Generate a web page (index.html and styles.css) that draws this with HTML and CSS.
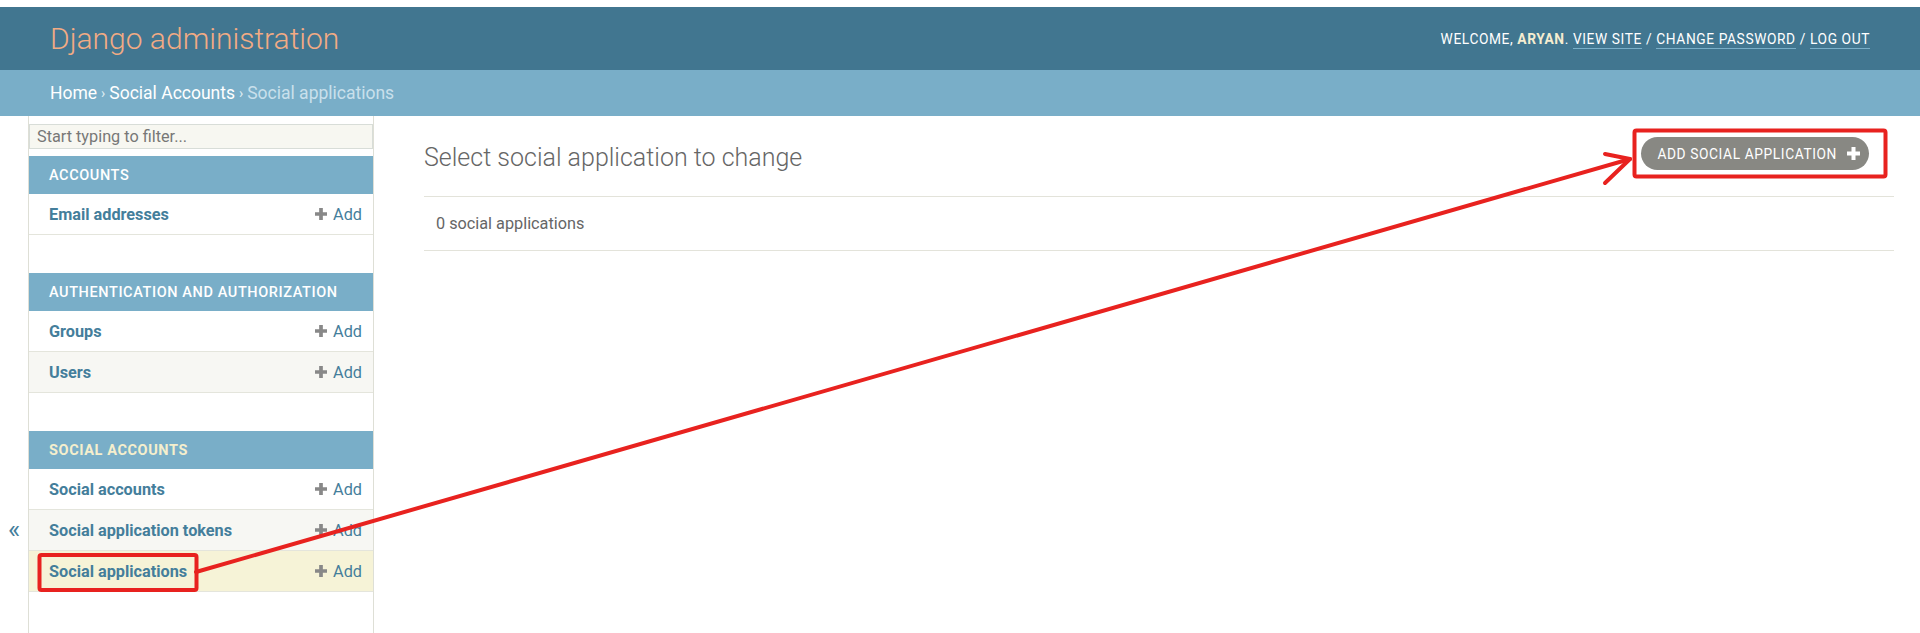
FILE: index.html
```html
<!DOCTYPE html>
<html lang="en">
<head>
<meta charset="utf-8">
<title>Select social application to change | Django site admin</title>
<link rel="stylesheet" href="styles.css">
</head>
<body>
<div class="page">
  <div class="topstrip"></div>
  <header class="header">
    <div class="branding">Django administration</div>
    <div class="user-tools">Welcome, <strong>aryan</strong>. <a href="#">View site</a> / <a href="#">Change password</a> / <a href="#">Log out</a></div>
  </header>
  <nav class="breadcrumbs"><a href="#">Home</a><span class="sep">›</span><a href="#">Social Accounts</a><span class="sep">›</span><span class="current">Social applications</span></nav>
  <div class="main">
    <div class="toggle"><span class="toggle-glyph">«</span></div>
    <aside class="sidebar">
      <input class="filter" type="search" placeholder="Start typing to filter...">
      <div class="module">
        <div class="caption">Accounts</div>
        <div class="row"><a class="model" href="#">Email addresses</a><a class="add" href="#"><svg class="plus" viewBox="0 0 13 13" width="13" height="13"><path d="M4.5 0h4v4.5H13v4H8.5V13h-4V8.5H0v-4h4.5z"/></svg>Add</a></div>
      </div>
      <div class="module">
        <div class="caption">Authentication and Authorization</div>
        <div class="row"><a class="model" href="#">Groups</a><a class="add" href="#"><svg class="plus" viewBox="0 0 13 13" width="13" height="13"><path d="M4.5 0h4v4.5H13v4H8.5V13h-4V8.5H0v-4h4.5z"/></svg>Add</a></div>
        <div class="row alt"><a class="model" href="#">Users</a><a class="add" href="#"><svg class="plus" viewBox="0 0 13 13" width="13" height="13"><path d="M4.5 0h4v4.5H13v4H8.5V13h-4V8.5H0v-4h4.5z"/></svg>Add</a></div>
      </div>
      <div class="module">
        <div class="caption current-app">Social Accounts</div>
        <div class="row"><a class="model" href="#">Social accounts</a><a class="add" href="#"><svg class="plus" viewBox="0 0 13 13" width="13" height="13"><path d="M4.5 0h4v4.5H13v4H8.5V13h-4V8.5H0v-4h4.5z"/></svg>Add</a></div>
        <div class="row alt"><a class="model" href="#">Social application tokens</a><a class="add" href="#"><svg class="plus" viewBox="0 0 13 13" width="13" height="13"><path d="M4.5 0h4v4.5H13v4H8.5V13h-4V8.5H0v-4h4.5z"/></svg>Add</a></div>
        <div class="row selected"><a class="model" href="#">Social applications</a><a class="add" href="#"><svg class="plus" viewBox="0 0 13 13" width="13" height="13"><path d="M4.5 0h4v4.5H13v4H8.5V13h-4V8.5H0v-4h4.5z"/></svg>Add</a></div>
      </div>
    </aside>
    <section class="content">
      <div class="content-head">
        <h1 class="title">Select social application to change</h1>
        <a class="addbutton" href="#">Add social application<svg class="plus-white" viewBox="0 0 13 13" width="13" height="13"><path d="M4.5 0h4v4.5H13v4H8.5V13h-4V8.5H0v-4h4.5z"/></svg></a>
      </div>
      <div class="paginator">0 social applications</div>
    </section>
  </div>
  <svg class="annotations" viewBox="0 0 1920 633" width="1920" height="633">
    <rect x="39.5" y="555" width="157" height="35" rx="2" fill="none" stroke="#e8221f" stroke-width="4"/>
    <rect x="1634.5" y="130.5" width="251" height="46" rx="2" fill="none" stroke="#e8221f" stroke-width="4"/>
    <path d="M196 572 L1630 159" fill="none" stroke="#e8221f" stroke-width="4" stroke-linecap="round"/>
    <path d="M1605 154 L1630 159 L1605 183" fill="none" stroke="#e8221f" stroke-width="4" stroke-linecap="round" stroke-linejoin="round"/>
  </svg>
</div>
</body>
</html>
```
FILE: styles.css
```css
* { box-sizing: border-box; }
html, body { margin: 0; padding: 0; }
body {
  font-family: Roboto, "Liberation Sans", Arial, sans-serif;
  color: #333;
  background: #fff;
  width: 1920px;
  height: 633px;
  overflow: hidden;
}
a { text-decoration: none; }
.page { position: relative; width: 1920px; height: 633px; }
.topstrip { height: 7px; background: #fff; }

.header {
  height: 63px;
  background: #417690;
  display: flex;
  align-items: center;
  justify-content: space-between;
  padding: 0 50px 0 50px;
}
.branding {
  font-size: 30px;
  font-weight: 300;
  color: #f2ab84;
  line-height: 36px;
}
.user-tools {
  font-size: 13.75px;
  letter-spacing: 0.6px;
  text-transform: uppercase;
  color: #fff;
  margin-top: 1px;
}
.user-tools strong { font-weight: 700; color: #f5edd0; }
.user-tools a {
  color: #fff;
  border-bottom: 1px solid #79aec8;
  padding-bottom: 1px;
}

.breadcrumbs {
  height: 46px;
  background: #79aec8;
  display: flex;
  align-items: center;
  padding-left: 50px;
  font-size: 17.5px;
  color: #c4dce8;
}
.breadcrumbs a { color: #fff; }
.breadcrumbs .sep { font-size: 14px; margin: 0 4px; color: #e0eef5; }
.breadcrumbs .current { color: #c9e0ec; }

.main {
  display: flex;
  height: 517px;
}
.toggle {
  flex: 0 0 29px;
  border-right: 1px solid #dedfd6;
  display: flex;
  justify-content: center;
  padding-top: 400px;
}
.toggle-glyph { color: #447e9b; font-size: 26px; line-height: 26px; }

.sidebar {
  flex: 0 0 345px;
  border-right: 1px solid #dedfd6;
  padding-top: 8px;
}
.filter {
  display: block;
  width: 100%;
  height: 25px;
  margin: 0 0 7px 0;
  border: 1px solid #d8ddd8;
  background: #f7f7f1;
  padding: 0 7px;
  font-family: Roboto, "Liberation Sans", Arial, sans-serif;
  font-size: 16.25px;
  color: #333;
}
.filter::placeholder { color: #777; }
.module { margin-bottom: 38px; }
.caption {
  height: 38px;
  background: #79aec8;
  color: #fff;
  display: flex;
  align-items: center;
  padding-left: 20px;
  font-size: 14.5px;
  letter-spacing: 0.6px;
  text-transform: uppercase;
  font-weight: 500;
}
.caption.current-app { color: #f5efcd; font-weight: 700; }
.row {
  height: 41px;
  border-bottom: 1px solid #e4e5dc;
  display: flex;
  align-items: center;
  justify-content: space-between;
  padding: 0 11px 0 20px;
  background: #fff;
}
.row.alt { background: #f7f7f3; }
.row.selected { background: #f6f3d7; }
.model {
  color: #447e9b;
  font-weight: 700;
  font-size: 16.25px;
}
.add {
  color: #447e9b;
  font-size: 16.25px;
  display: flex;
  align-items: center;
}
.plus { fill: #888; width: 12px; height: 12px; margin-right: 6px; }

.content {
  flex: 1;
  padding: 21px 26px 0 50px;
}
.content-head {
  display: flex;
  justify-content: space-between;
  align-items: flex-start;
  margin-bottom: 23px;
}
.title {
  margin: 6px 0 0 0;
  font-size: 25px;
  font-weight: 300;
  line-height: 30px;
  color: #666;
}
.addbutton {
  display: flex;
  align-items: center;
  height: 33px;
  border-radius: 17px;
  background: #888883;
  color: #fff;
  font-size: 13.75px;
  letter-spacing: 0.6px;
  text-transform: uppercase;
  padding: 0 9px 0 16px;
  margin-right: 25px;
  gap: 10px;
}
.plus-white { fill: #fff; }
.paginator {
  border-top: 1px solid #e3e3da;
  border-bottom: 1px solid #e3e3da;
  height: 55px;
  display: flex;
  align-items: center;
  padding-left: 12px;
  font-size: 16.25px;
  color: #666;
}

.annotations {
  position: absolute;
  top: 0;
  left: 0;
  pointer-events: none;
}
```
